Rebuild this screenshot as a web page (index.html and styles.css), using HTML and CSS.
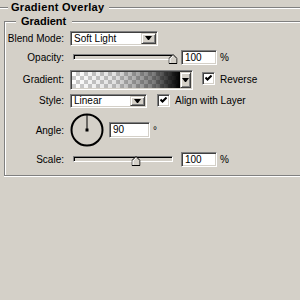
FILE: index.html
```html
<!DOCTYPE html>
<html lang="en">
<head>
  <meta charset="UTF-8">
  <title>Gradient Overlay</title>
  <link rel="stylesheet" href="styles.css">
</head>
<body>
  <fieldset class="group outer">
    <legend>Gradient Overlay</legend>

    <fieldset class="group inner">
      <legend>Gradient</legend>

      <div class="row row-blend">
        <label>Blend Mode:</label>
        <div class="combo sunken combo-blend">
          <span>Soft Light</span>
          <i class="drop"></i>
        </div>
      </div>

      <div class="row row-opacity">
        <label>Opacity:</label>
        <div class="slider">
          <div class="track"></div>
          <svg class="thumb" style="left: 100%" width="9" height="10" viewBox="0 0 9 10">
            <path d="M.5 9.5V4.5L4.5.5l4 4v5z" fill="#d4d0c8" stroke="#000"/>
            <path d="M1.5 9V4.9l3-3" fill="none" stroke="#fff"/>
          </svg>
        </div>
        <div class="field sunken">100</div>
        <span class="unit">%</span>
      </div>

      <div class="row row-gradient">
        <label>Gradient:</label>
        <div class="swatch sunken">
          <div class="ramp"></div>
          <i class="drop"></i>
        </div>
        <span class="check sunken">
          <svg width="7" height="7" viewBox="0 0 7 7"><path d="M.5 2.5l2 2 4-4" fill="none" stroke="#000" stroke-width="2"/></svg>
        </span>
        <span>Reverse</span>
      </div>

      <div class="row row-style">
        <label>Style:</label>
        <div class="combo sunken combo-style">
          <span>Linear</span>
          <i class="drop"></i>
        </div>
        <span class="check sunken check-align">
          <svg width="7" height="7" viewBox="0 0 7 7"><path d="M.5 2.5l2 2 4-4" fill="none" stroke="#000" stroke-width="2"/></svg>
        </span>
        <span>Align with Layer</span>
      </div>

      <div class="row row-angle">
        <label>Angle:</label>
        <svg class="dial" width="34" height="34" viewBox="0 0 34 34">
          <circle cx="17" cy="17" r="15.5" fill="none" stroke="#000" stroke-width="2"/>
          <line x1="17" y1="17" x2="17" y2="2" stroke="#000"/>
          <rect x="15.5" y="15.5" width="3" height="3"/>
        </svg>
        <div class="field sunken field-angle">90</div>
        <span class="unit">°</span>
      </div>

      <div class="row row-scale">
        <label>Scale:</label>
        <div class="slider">
          <div class="track"></div>
          <svg class="thumb" style="left: 63%" width="9" height="10" viewBox="0 0 9 10">
            <path d="M.5 9.5V4.5L4.5.5l4 4v5z" fill="#d4d0c8" stroke="#000"/>
            <path d="M1.5 9V4.9l3-3" fill="none" stroke="#fff"/>
          </svg>
        </div>
        <div class="field sunken">100</div>
        <span class="unit">%</span>
      </div>
    </fieldset>
  </fieldset>
</body>
</html>
```

FILE: styles.css
```css
* { box-sizing: border-box; }
html, body { width: 300px; height: 300px; overflow: hidden; }
body { margin: 0; background: #d4d0c8; color: #000; font-family: "Liberation Sans", Arial, sans-serif; font-size: 10px; }

/* etched group boxes, the right edge is cut off by the window */
.group { margin: 0; padding: 0; min-width: 0; border: 1px solid #808080; border-right: 0; box-shadow: inset 1px 1px #fff, 0 1px #fff; }
.group > legend { font-size: 11px; font-weight: bold; line-height: 15px; background: #d4d0c8; }
.outer { margin-left: -2px; height: 340px; border-bottom: 0; }
.outer > legend { margin-left: 9px; padding: 0 5px 0 3px; letter-spacing: 0.3px; }
.inner { margin: -1px 0 0 5px; padding-bottom: 7px; }
.inner > legend { margin-left: 11px; padding: 0 6px 0 5px; }

/* rows */
.row { display: flex; align-items: center; }
.row label { width: 59px; margin-right: 6px; text-align: right; }
.row-blend { height: 18px; }
.row-opacity { height: 20px; }
.row-gradient { height: 25px; }
.row-style { height: 17px; }
.row-angle { height: 42px; }
.row-scale { height: 17px; }

/* 3d borders */
.sunken { border: 1px solid; border-color: #808080 #fff #fff #808080; box-shadow: inset 1px 1px #404040, inset -1px -1px #d4d0c8; background: #fff; }
.drop { display: flex; align-items: center; justify-content: center; align-self: stretch; background: #d4d0c8; border: 1px solid; border-color: #d4d0c8 #404040 #404040 #d4d0c8; box-shadow: inset 1px 1px #fff, inset -1px -1px #808080; }
.drop::after { content: ""; box-sizing: content-box; width: 1px; border-top: 4px solid #000; border-left: 3px solid transparent; border-right: 3px solid transparent; }

/* combo boxes */
.combo { display: flex; align-items: center; padding: 1px; }
.combo span { flex: 1; padding-left: 2px; }
.combo .drop { width: 15px; }
.combo-blend { width: 88px; height: 15px; }
.combo-style { width: 77px; height: 14px; }

/* sliders */
.slider { position: relative; width: 100px; height: 10px; margin: 3px 8px 0 3px; }
.track { height: 6px; border: 1px solid; border-color: #808080 #fff #fff #808080; box-shadow: inset 1px 1px #000; background: #d4d0c8; }
.thumb { position: absolute; top: 0; transform: translateX(-50%); }

/* fields */
.field { width: 36px; height: 15px; padding: 0 3px; line-height: 13px; }
.field-angle { width: 41px; height: 16px; line-height: 14px; }
.unit { margin-left: 3px; }
.dial { margin-right: 5px; }

/* gradient swatch */
.swatch { display: flex; width: 123px; height: 20px; padding: 1px; }
.ramp {
  flex: 1;
  background:
    linear-gradient(to right, rgba(0,0,0,0) 0%, rgba(0,0,0,.12) 40%, rgba(0,0,0,.5) 75%, #000 100%),
    linear-gradient(45deg, #ccc 25%, transparent 25%, transparent 75%, #ccc 75%),
    linear-gradient(45deg, #ccc 25%, transparent 25%, transparent 75%, #ccc 75%);
  background-color: #fff;
  background-size: 100% 100%, 8px 8px, 8px 8px;
  background-position: 0 0, 0 0, 4px 4px;
}
.swatch .drop { width: 11px; }

/* checkboxes */
.check { display: flex; align-items: center; justify-content: center; width: 13px; height: 13px; margin: -2px 5px 0 9px; }
.check-align { margin: 0 5px 0 10px; }
```
